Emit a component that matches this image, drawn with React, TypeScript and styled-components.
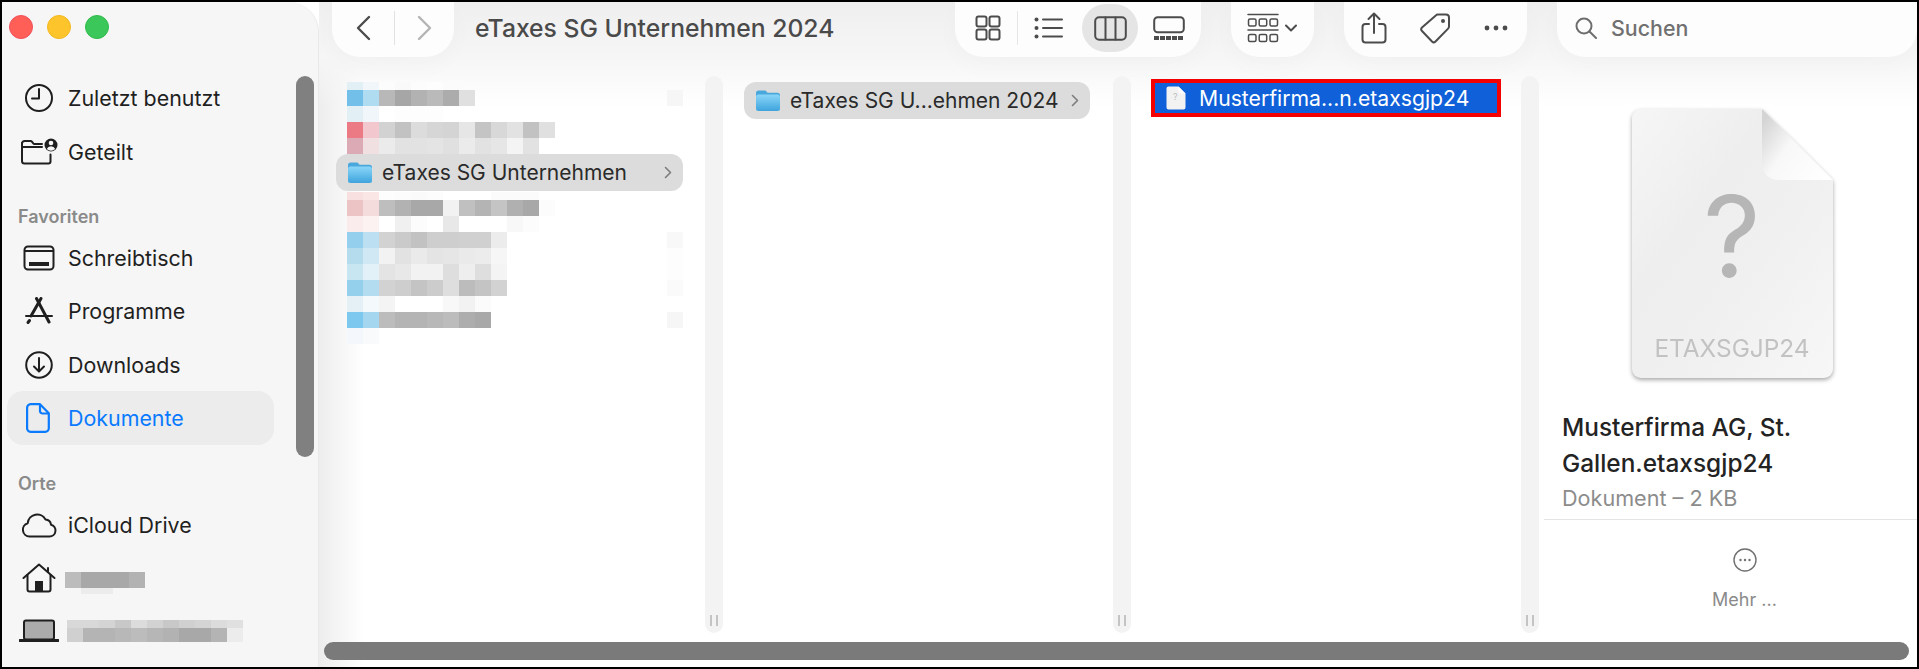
import React from "react";
import styled, { createGlobalStyle } from "styled-components";

const GlobalStyle = createGlobalStyle`
  html, body { margin: 0; padding: 0; background: #000; }
  body { font-family: Inter, "Noto Sans", sans-serif; }
`;

const Window = styled.div`
  box-sizing: border-box;
  width: 1919px;
  height: 669px;
  border: 2px solid #000;
  display: flex;
  overflow: hidden;
  background: #fff;
  color: #1f1f1f;
`;

// Sidebar
const Sidebar = styled.aside`
  position: relative;
  flex: none;
  box-sizing: border-box;
  width: 317px;
  height: 100%;
  background: #f6f6f6;
  border-top-right-radius: 30px;
  border-right: 1px solid #e9e9e9;
  overflow: hidden;
`;

const Lights = styled.div`
  display: flex;
  gap: 14px;
  padding: 13px 0 0 7px;
  height: 56px;
  box-sizing: border-box;
`;

const Light = styled.span<{ $color: string; $edge: string }>`
  width: 24px;
  height: 24px;
  border-radius: 50%;
  box-sizing: border-box;
  background: ${({ $color }) => $color};
  border: 1px solid ${({ $edge }) => $edge};
`;

const SidebarList = styled.div`
  padding-top: 13.5px;
`;

const SideRow = styled.div<{ $active?: boolean }>`
  display: flex;
  align-items: center;
  gap: 12px;
  box-sizing: border-box;
  width: 267px;
  height: 53.4px;
  margin-left: 5px;
  padding-left: 15px;
  border-radius: 16px;
  font-size: 21.4px;
  background: ${({ $active }) => ($active ? "#ececec" : "transparent")};
  color: ${({ $active }) => ($active ? "#0a7aff" : "#1f1f1f")};
`;

const SideIcon = styled.span`
  flex: none;
  display: flex;
  width: 34px;
  justify-content: center;
  align-items: center;

  svg {
    flex: none;
  }
`;

const MosaicSlot = styled.span<{ $ml: number }>`
  margin-left: ${({ $ml }) => $ml}px;
`;

const SideHeading = styled.div`
  box-sizing: border-box;
  height: 53px;
  padding: 28px 0 0 16px;
  font-size: 18px;
  line-height: 22px;
  font-weight: 600;
  color: #8a8a8a;
`;

const SideThumb = styled.div`
  position: absolute;
  left: 294px;
  top: 74px;
  width: 18px;
  height: 381px;
  border-radius: 9px;
  background: #808080;
`;

// Main area
const Main = styled.main`
  flex: 1;
  min-width: 0;
  display: flex;
  flex-direction: column;
  background: linear-gradient(to bottom, #efefef 0, #f6f6f6 55px, rgba(255, 255, 255, 0) 105px),
    linear-gradient(to right, #ededed 0, #ffffff 45px), #fff;
`;

const Toolbar = styled.header`
  flex: none;
  display: flex;
  align-items: flex-start;
  height: 58px;
  padding: 0 0 0 13px;
  gap: 30px;
`;

const Pill = styled.div<{ $w: number }>`
  flex: none;
  display: flex;
  align-items: center;
  box-sizing: border-box;
  width: ${({ $w }) => $w}px;
  height: 55px;
  padding-bottom: 3px;
  border-radius: 0 0 28px 28px;
  background: #fdfdfd;
  box-shadow: 0 8px 26px rgba(0, 0, 0, 0.025);
`;

const NavPill = styled(Pill)`
  margin-right: -9px;
`;

const Title = styled.h1`
  flex: 1;
  margin: 0;
  font-size: 24.7px;
  line-height: 53px;
  font-weight: 500;
  color: #4a4a4a;
  white-space: nowrap;
`;

const Slot = styled.span<{ $w?: number; $ml?: number; $active?: boolean }>`
  flex: none;
  display: flex;
  justify-content: center;
  align-items: center;
  width: ${({ $w }) => $w ?? 38}px;
  height: ${({ $active }) => ($active ? "48px" : "auto")};
  margin-left: ${({ $ml }) => $ml ?? 0}px;
  border-radius: 24px;
  background: ${({ $active }) => ($active ? "#e5e5e5" : "transparent")};
`;

const BarDivider = styled.span<{ $ml: number; $color?: string }>`
  flex: none;
  width: 1px;
  height: 34px;
  margin-left: ${({ $ml }) => $ml}px;
  background: ${({ $color }) => $color ?? "#e6e6e6"};
`;

const SearchText = styled.span`
  margin-left: 6px;
  font-size: 21.4px;
  font-weight: 500;
  color: #707070;
`;

const Panes = styled.div`
  flex: 1;
  min-height: 0;
  display: flex;
`;

const Column = styled.section<{ $w: number }>`
  flex: none;
  width: ${({ $w }) => $w}px;
  display: flex;
`;

const ColumnBody = styled.div<{ $pl: number }>`
  flex: 1;
  min-width: 0;
  padding: 22px 0 0 ${({ $pl }) => $pl}px;
`;

const Track = styled.div`
  flex: none;
  position: relative;
  width: 18px;
  margin: 16px 0 9px;
  border-radius: 9px;
  background: #f3f3f3;
`;

const Grip = styled.span`
  position: absolute;
  left: 5px;
  bottom: 7px;
  width: 8px;
  height: 11px;
  border: solid #c4c4c4;
  border-width: 0 2px;
  box-sizing: border-box;
`;

const FileRow = styled.div<{ $w: number; $ml?: number }>`
  display: flex;
  align-items: center;
  box-sizing: border-box;
  width: ${({ $w }) => $w}px;
  height: 37px;
  margin: 0 0 1px ${({ $ml }) => $ml ?? 0}px;
  padding-left: 11px;
  border-radius: 12px;
  background: #dcdcdc;
  font-size: 21px;
  color: #2a2a2a;
  white-space: nowrap;
`;

const RowLabel = styled.span`
  flex: 1;
  margin-left: 9px;
`;

const RowChevron = styled.span`
  flex: none;
  display: flex;
  width: 22px;
  margin-right: 4px;
  justify-content: center;
`;

const HighlightRow = styled.div`
  display: flex;
  align-items: center;
  box-sizing: border-box;
  width: 350px;
  height: 38px;
  margin: -3px 0 0 20px;
  padding-left: 11px;
  border: 4px solid #f40000;
  background: #1061d9;
  font-size: 21.2px;
  color: #fff;
  white-space: nowrap;
`;

const HighlightLabel = styled.span`
  margin-left: 13px;
`;

const Preview = styled.section`
  flex: 1;
  min-width: 0;
  display: flex;
  flex-direction: column;
`;

const PreviewIcon = styled.div`
  display: flex;
  justify-content: center;
  padding: 49px 0 0 8px;
  height: 349px;
  box-sizing: border-box;
`;

const PreviewName = styled.h2`
  margin: 0;
  padding-left: 23px;
  font-size: 24.4px;
  line-height: 36px;
  font-weight: 500;
  color: #232323;
`;

const PreviewMeta = styled.div`
  padding: 5px 0 8px 23px;
  font-size: 21.6px;
  line-height: 25px;
  color: #8c8c8c;
`;

const PreviewRule = styled.div`
  height: 1px;
  margin-left: 5px;
  background: #e4e4e4;
`;

const MoreBlock = styled.div`
  display: flex;
  flex-direction: column;
  align-items: center;
  padding: 28px 0 0 33px;
  gap: 17px;
  font-size: 18px;
  color: #8a8a8a;
`;

const HScroll = styled.div`
  flex: none;
  height: 18px;
  margin: 0 8px 7px 5px;
  border-radius: 9px;
  background: #7a7a7a;
`;

// Pixelated redactions from the original screenshot
type MosaicRow = { h: number; cells: string[]; right?: string };

const Mosaic = ({ rows, width = 340 }: { rows: MosaicRow[]; width?: number }) => {
  let y = 0;
  const total = rows.reduce((sum, r) => sum + r.h, 0);
  return (
    <svg width={width} height={total} shapeRendering="crispEdges" style={{ display: "block" }}>
      {rows.map((row, i) => {
        const top = y;
        y += row.h;
        return (
          <g key={i}>
            {row.cells.map((c, j) => (
              <rect key={j} x={j * 16} y={top} width={16} height={row.h} fill={c} />
            ))}
            {row.right && <rect x={320} y={top} width={16} height={row.h} fill={row.right} />}
          </g>
        );
      })}
    </svg>
  );
};

const topRows: MosaicRow[] = [
  { h: 8, cells: ["#e2eff5", "#f0f6fa", "#fcfcfc", "#f9f9f9", "#fcfcfc", "#fdfdfd", "#fbfbfb"] },
  { h: 16, cells: ["#72c0ea", "#b0dcf2", "#b8b8b8", "#a6a6a6", "#b2b2b2", "#bababa", "#acacac", "#e0e0e0"], right: "#f6f6f6" },
  { h: 16, cells: ["#e2eff5", "#f0f6fa", "#ffffff", "#fdfdfd", "#fdfdfd", "#fdfdfd"] },
  { h: 16, cells: ["#ec7a85", "#f2c8ce", "#d2d2d2", "#c2c2c2", "#dcdcdc", "#d6d6d6", "#d4d4d4", "#e6e6e6", "#c4c4c4", "#d8d8d8", "#e2e2e2", "#c2c2c2", "#e0e0e0"] },
  { h: 16, cells: ["#dcaab4", "#f0e0e2", "#ebebeb", "#e2e2e2", "#e2e2e2", "#e4e4e4", "#e0e0e0", "#ebebeb", "#e2e2e2", "#e6e6e6", "#f4f4f4", "#e2e2e2"] },
];

const bottomRows: MosaicRow[] = [
  { h: 8, cells: ["#f8dfe0", "#fbe6e6", "#fdfdfd", "#fcfcfc", "#fafafa", "#fcfcfc", "#ffffff", "#ffffff", "#ffffff", "#fbfbfb", "#fbfbfb", "#fbfbfb"] },
  { h: 16, cells: ["#ecc4c6", "#f4dcdc", "#bebebe", "#b2b2b2", "#a8a8a8", "#a8a8a8", "#f2f2f2", "#c0c0c0", "#b4b4b4", "#c4c4c4", "#b0b0b0", "#a8a8a8", "#fcfcfc"] },
  { h: 16, cells: ["#faecec", "#fdf2f2", "#ffffff", "#f0f0f0", "#fcfcfc", "#ffffff", "#e8e8e8", "#ffffff", "#ffffff", "#ffffff", "#f8f8f8", "#fcfcfc"] },
  { h: 16, cells: ["#94d0ee", "#bcdff2", "#d2d2d2", "#cacaca", "#c2c2c2", "#cecece", "#cecece", "#d0d0d0", "#d0d0d0", "#ececec"], right: "#f8f8f8" },
  { h: 16, cells: ["#b4dcec", "#d0e8f4", "#f2f2f2", "#e2e2e2", "#eaeaea", "#e4e4e4", "#e6e6e6", "#eaeaea", "#ececec", "#f6f6f6"], right: "#fdfdfd" },
  { h: 16, cells: ["#c8e6f2", "#e2f1f8", "#e4e4e4", "#e8e8e8", "#f2f2f2", "#f2f2f2", "#dedede", "#eeeeee", "#dedede", "#f4f4f4"], right: "#fdfdfd" },
  { h: 16, cells: ["#94d0ec", "#b4dcf0", "#d2d2d2", "#cecece", "#c4c4c4", "#cccccc", "#dedede", "#bcbcbc", "#c4c4c4", "#d2d2d2"], right: "#fafafa" },
  { h: 16, cells: ["#e4f0f6", "#f4f9fc", "#f4f4f4", "#ffffff", "#ffffff", "#ffffff", "#f8f8f8", "#f2f2f2", "#fbfbfb"] },
  { h: 16, cells: ["#7cc8ee", "#a4d6f0", "#bcbcbc", "#b4b4b4", "#b4b4b4", "#b8b8b8", "#bcbcbc", "#adadad", "#a8a8a8"], right: "#f6f6f6" },
  { h: 16, cells: ["#f4f7fb", "#f8fafc"] },
];

const homeRows: MosaicRow[] = [
  { h: 10, cells: [] },
  { h: 16, cells: ["#bcbcbc", "#a8a8a8", "#a8a8a8", "#a8a8a8", "#b2b2b2"] },
  { h: 6, cells: ["#f6f6f6", "#ececec", "#ececec"] },
];

const laptopRows: MosaicRow[] = [
  { h: 8, cells: ["#d8d8d8", "#d8d8d8", "#d4d4d4", "#c8c8c8", "#dcdcdc", "#d2d2d2", "#c8c8c8", "#d0d0d0", "#d4d4d4", "#dcdcdc", "#e0e0e0"] },
  { h: 14, cells: ["#d0d0d0", "#b4b4b4", "#b4b4b4", "#b8b8b8", "#bcbcbc", "#b6b6b6", "#b2b2b2", "#a8a8a8", "#a8a8a8", "#b4b4b4", "#ececec"] },
];

// Icons
const ink = { fill: "none", stroke: "#1f1f1f", strokeWidth: 2, strokeLinecap: "round", strokeLinejoin: "round" } as const;
const gray = { ...ink, stroke: "#4c4c4c" };

const ClockIcon = () => (
  <svg width="30" height="30" viewBox="0 0 30 30">
    <g {...ink}>
      <circle cx="15" cy="15" r="13" />
      <path d="M15 6v9.5H8" />
    </g>
  </svg>
);
const SharedIcon = () => (
  <svg width="38" height="28" viewBox="0 0 38 28">
    <g {...ink}>
      <path d="M2 5.5a2.5 2.5 0 0 1 2.5-2.5h6a2 2 0 0 1 1.6.8l1 1.4c.3.5.9.8 1.5.8H22" />
      <path d="M2 9h20M2 5v18a2.5 2.5 0 0 0 2.5 2.5h24a2 2 0 0 0 2-2v-7" />
    </g>
    <circle cx="31" cy="7" r="6.5" fill="#1f1f1f" />
    <circle cx="31" cy="5" r="2.3" fill="#f6f6f6" />
    <path d="M26.8 11a4.6 4.6 0 0 1 8.4 0a6 6 0 0 1-8.4 0z" fill="#f6f6f6" />
  </svg>
);
const DesktopIcon = () => (
  <svg width="32" height="26" viewBox="0 0 32 26">
    <g {...ink}>
      <rect x="1.5" y="1.5" width="29" height="23" rx="3.5" />
      <path d="M2 6h28" />
    </g>
    <rect x="6" y="17" width="20" height="4" fill="#1f1f1f" />
  </svg>
);
const AppsIcon = () => (
  <svg width="30" height="28" viewBox="0 0 30 28">
    <g {...ink} strokeWidth={3}>
      <path d="M12.500 1.500L25 25" />
      <path d="M17 1.500L7 19" />
      <path d="M2 19h26" strokeWidth={2} />
      <path d="M4 25.500l1.500-2" strokeWidth={3} />
    </g>
  </svg>
);
const DownloadIcon = () => (
  <svg width="28" height="28" viewBox="0 0 28 28">
    <g {...ink}>
      <circle cx="14" cy="14" r="12.8" />
      <path d="M14 7v13M9 15.5l5 5 5-5" />
    </g>
  </svg>
);
const DocumentIcon = () => (
  <svg width="24" height="30" viewBox="0 0 24 30" style={{ marginLeft: -3 }}>
    <g fill="none" stroke="#0a7aff" strokeWidth="2.2" strokeLinejoin="round">
      <path d="M4.500 1.200h9.500l8.800 9v15a3.500 3.500 0 0 1-3.500 3.600h-14.800a3.500 3.500 0 0 1-3.400-3.600v-20.500a3.500 3.500 0 0 1 3.400-3.500z" />
      <path d="M14 1.500v6.500a2.500 2.500 0 0 0 2.500 2.500h6" />
    </g>
  </svg>
);
const CloudIcon = () => (
  <svg width="36" height="26" viewBox="0 0 36 26">
    <path {...ink} d="M8.500 24.500a6.800 6.800 0 0 1-1.800-13.300 9.500 9.500 0 0 1 17.800-3.700 6 6 0 0 1 5.500 5.200 6 6 0 0 1-1.500 11.800z" />
  </svg>
);
const HomeIcon = () => (
  <svg width="34" height="30" viewBox="0 0 34 30">
    <g {...ink}>
      <path d="M1.500 15L17 1.500 32.500 15" />
      <path d="M5.500 12v14.500a2 2 0 0 0 2 2h19a2 2 0 0 0 2-2V12" />
      <path d="M26 5v4" />
    </g>
    <rect x="13" y="18" width="8" height="10" fill="#1f1f1f" />
  </svg>
);
const LaptopIcon = () => (
  <svg width="40" height="24" viewBox="0 0 40 24">
    <rect x="5" y="1.500" width="30" height="19" rx="2" fill="#ababab" stroke="#1f1f1f" strokeWidth="2" />
    <path d="M1 21.500h38" stroke="#1f1f1f" strokeWidth="3" strokeLinecap="round" />
  </svg>
);

const BackIcon = ({ color, flip }: { color: string; flip?: boolean }) => (
  <svg width="16" height="26" viewBox="0 0 16 26" style={flip ? { transform: "scaleX(-1)" } : undefined}>
    <path d="M14 2L3 13l11 11" fill="none" stroke={color} strokeWidth="2.400" strokeLinecap="round" strokeLinejoin="round" />
  </svg>
);
const GridIcon = () => (
  <svg width="26" height="26" viewBox="0 0 26 26">
    <g {...gray}>
      <rect x="1.500" y="1.500" width="10" height="10" rx="2" />
      <rect x="14.500" y="1.500" width="10" height="10" rx="2" />
      <rect x="1.500" y="14.500" width="10" height="10" rx="2" />
      <rect x="14.500" y="14.500" width="10" height="10" rx="2" />
    </g>
  </svg>
);
const ListIcon = () => (
  <svg width="29" height="22" viewBox="0 0 29 22">
    <g {...gray}>
      <path d="M9 2.500h19M9 11h19M9 19.500h19" />
    </g>
    <circle cx="2.500" cy="2.500" r="2" fill="#4c4c4c" />
    <circle cx="2.500" cy="11" r="2" fill="#4c4c4c" />
    <circle cx="2.500" cy="19.500" r="2" fill="#4c4c4c" />
  </svg>
);
const ColumnsIcon = () => (
  <svg width="33" height="25" viewBox="0 0 33 25">
    <g {...gray}>
      <rect x="1.200" y="1.200" width="30.600" height="22.600" rx="4" />
      <path d="M11.500 1.500v22M21.500 1.500v22" />
    </g>
  </svg>
);
const GalleryIcon = () => (
  <svg width="32" height="25" viewBox="0 0 32 25">
    <rect {...gray} x="1.200" y="1.200" width="29.600" height="15" rx="3.500" />
    {[1, 7, 13, 19, 25].map((x) => (
      <rect key={x} x={x} y="20" width="5" height="4" fill="#4c4c4c" />
    ))}
  </svg>
);
const GroupIcon = () => (
  <svg width="32" height="30" viewBox="0 0 32 30">
    <g {...gray} strokeWidth={1.500}>
      <path d="M1 1.500h30M1 17h30" />
      <rect x="1.500" y="6" width="7.500" height="7" rx="1.500" />
      <rect x="12.200" y="6" width="7.500" height="7" rx="1.500" />
      <rect x="23" y="6" width="7.500" height="7" rx="1.500" />
      <rect x="1.500" y="21.500" width="7.500" height="7" rx="1.500" />
      <rect x="12.200" y="21.500" width="7.500" height="7" rx="1.500" />
      <rect x="23" y="21.500" width="7.500" height="7" rx="1.500" />
    </g>
  </svg>
);
const SmallChevron = () => (
  <svg width="12" height="8" viewBox="0 0 12 8">
    <path d="M1 1.500l5 5 5-5" {...gray} />
  </svg>
);
const ShareIcon = () => (
  <svg width="26" height="32" viewBox="0 0 26 32">
    <g {...gray}>
      <path d="M8 12H4.500a3 3 0 0 0-3 3v12.500a3 3 0 0 0 3 3h17a3 3 0 0 0 3-3V15a3 3 0 0 0-3-3H18" />
      <path d="M13 21V2M7.500 7L13 1.500 18.500 7" />
    </g>
  </svg>
);
const TagIcon = () => (
  <svg width="31" height="32" viewBox="0 0 31 32">
    <path {...gray} d="M18 2.500h8a3 3 0 0 1 3 3v9a3 3 0 0 1-.9 2.100L15.500 29.500a2.500 2.500 0 0 1-3.500 0L2 19a2.500 2.500 0 0 1 0-3.500L15.800 3.400a3 3 0 0 1 2.200-.9z" />
    <circle cx="23" cy="9" r="2" fill="#4c4c4c" />
  </svg>
);
const DotsIcon = () => (
  <svg width="24" height="6" viewBox="0 0 24 6">
    <circle cx="3" cy="3" r="2.400" fill="#4c4c4c" />
    <circle cx="12" cy="3" r="2.400" fill="#4c4c4c" />
    <circle cx="21" cy="3" r="2.400" fill="#4c4c4c" />
  </svg>
);
const SearchIcon = () => (
  <svg width="22" height="22" viewBox="0 0 22 22">
    <circle cx="9" cy="9" r="7.500" fill="none" stroke="#6e6e6e" strokeWidth="2" />
    <path d="M14.500 14.500L21 21" stroke="#6e6e6e" strokeWidth="2" strokeLinecap="round" />
  </svg>
);
const FolderIcon = ({ id }: { id: string }) => (
  <svg width="26" height="23" viewBox="0 0 26 23">
    <defs>
      <linearGradient id={id} x1="0" y1="0" x2="0" y2="1">
        <stop offset="0" stopColor="#8ad6f8" />
        <stop offset="1" stopColor="#3ea4dd" />
      </linearGradient>
    </defs>
    <path d="M1 4a2.500 2.500 0 0 1 2.500-2.500h6c1 0 1.600.5 2.200 1.200l.8 1h10a2.500 2.500 0 0 1 2.500 2.500v2H1z" fill="#4aa8dc" />
    <rect x="1" y="5.500" width="24" height="16.500" rx="2.500" fill={`url(#${id})`} />
  </svg>
);
const TinyChevron = () => (
  <svg width="8" height="13" viewBox="0 0 8 13">
    <path d="M1.500 1.500l5 5-5 5" fill="none" stroke="#7d7d7d" strokeWidth="1.600" strokeLinecap="round" strokeLinejoin="round" />
  </svg>
);
const TinyFile = () => (
  <svg width="20" height="24" viewBox="0 0 20 24">
    <path d="M2.500 0.500h10l7 7v14a2 2 0 0 1-2 2h-15a2 2 0 0 1-2-2v-19a2 2 0 0 1 2-2z" fill="#f2f2f2" />
    <path d="M12.500 0.500v5a2 2 0 0 0 2 2h5z" fill="#ffffff" />
    <text x="7" y="14" fontSize="9" fill="#bdbdbd" fontFamily="Inter, sans-serif">?</text>
  </svg>
);
const MoreIcon = () => (
  <svg width="24" height="24" viewBox="0 0 24 24">
    <circle cx="12" cy="12" r="11" fill="none" stroke="#707070" strokeWidth="1.400" />
    <circle cx="7.500" cy="12" r="1.200" fill="#707070" />
    <circle cx="12" cy="12" r="1.200" fill="#707070" />
    <circle cx="16.500" cy="12" r="1.200" fill="#707070" />
  </svg>
);
const DocPreview = () => (
  <svg width="201" height="269" viewBox="0 0 201 269" style={{ overflow: "visible", filter: "drop-shadow(0 2px 2px rgba(0,0,0,.34))" }}>
    <defs>
      <linearGradient id="docBody" x1="0" y1="0" x2="1" y2="1">
        <stop offset="0" stopColor="#f6f6f6" />
        <stop offset="0.35" stopColor="#eeeeee" />
        <stop offset="0.6" stopColor="#f0f0f0" />
        <stop offset="1" stopColor="#f7f7f7" />
      </linearGradient>
      <linearGradient id="docFold" x1="0" y1="0.2" x2="1" y2="0.9">
        <stop offset="0" stopColor="#d4d4d4" />
        <stop offset="0.4" stopColor="#f8f8f8" />
        <stop offset="1" stopColor="#ffffff" />
      </linearGradient>
    </defs>
    <path d="M9 0H130L201 71V260a9 9 0 0 1-9 9H9a9 9 0 0 1-9-9V9a9 9 0 0 1 9-9z" fill="url(#docBody)" />
    <path d="M130 0V55a16 16 0 0 0 16 16H201z" fill="url(#docFold)" />
    <text x="100" y="168" textAnchor="middle" fontSize="112" fontWeight="400" fill="#b6b6b6" fontFamily="Inter, sans-serif">?</text>
    <text x="100" y="248" textAnchor="middle" fontSize="24.400" fill="#c2c2c2" fontFamily="Inter, sans-serif">ETAXSGJP24</text>
  </svg>
);

const App = () => (
  <>
    <GlobalStyle />
    <Window>
      <Sidebar>
        <Lights>
          <Light $color="#ff5f57" $edge="#f0505c" />
          <Light $color="#fdc42c" $edge="#f2b820" />
          <Light $color="#3cc75a" $edge="#30bb4c" />
        </Lights>
        <SidebarList>
          <SideRow><SideIcon><ClockIcon /></SideIcon>Zuletzt benutzt</SideRow>
          <SideRow><SideIcon><SharedIcon /></SideIcon>Geteilt</SideRow>
          <SideHeading>Favoriten</SideHeading>
          <SideRow><SideIcon><DesktopIcon /></SideIcon>Schreibtisch</SideRow>
          <SideRow><SideIcon><AppsIcon /></SideIcon>Programme</SideRow>
          <SideRow><SideIcon><DownloadIcon /></SideIcon>Downloads</SideRow>
          <SideRow $active><SideIcon><DocumentIcon /></SideIcon>Dokumente</SideRow>
          <SideHeading>Orte</SideHeading>
          <SideRow><SideIcon><CloudIcon /></SideIcon>iCloud Drive</SideRow>
          <SideRow><SideIcon><HomeIcon /></SideIcon><MosaicSlot $ml={-3}><Mosaic rows={homeRows} width={80} /></MosaicSlot></SideRow>
          <SideRow><SideIcon><LaptopIcon /></SideIcon><MosaicSlot $ml={-1}><Mosaic rows={laptopRows} width={176} /></MosaicSlot></SideRow>
        </SidebarList>
        <SideThumb />
      </Sidebar>
      <Main>
        <Toolbar>
          <NavPill $w={122}>
            <Slot $w={62}><BackIcon color="#4c4c4c" /></Slot>
            <BarDivider $ml={0} $color="#e2e2e2" />
            <Slot $w={59}><BackIcon color="#b4b4b4" flip /></Slot>
          </NavPill>
          <Title>eTaxes SG Unternehmen 2024</Title>
          <Pill $w={246}>
            <Slot $ml={14}><GridIcon /></Slot>
            <BarDivider $ml={10} />
            <Slot $ml={11}><ListIcon /></Slot>
            <Slot $w={56} $ml={15} $active><ColumnsIcon /></Slot>
            <Slot $ml={12}><GalleryIcon /></Slot>
          </Pill>
          <Pill $w={83}>
            <Slot $ml={13} $w={37}><GroupIcon /></Slot>
            <Slot $ml={3} $w={14}><SmallChevron /></Slot>
          </Pill>
          <Pill $w={183}>
            <Slot $ml={11}><ShareIcon /></Slot>
            <Slot $ml={23}><TagIcon /></Slot>
            <Slot $ml={23}><DotsIcon /></Slot>
          </Pill>
          <Pill $w={360}>
            <Slot $ml={10}><SearchIcon /></Slot>
            <SearchText>Suchen</SearchText>
          </Pill>
        </Toolbar>
        <Panes>
          <Column $w={404}>
            <ColumnBody $pl={28}>
              <Mosaic rows={topRows} />
              <FileRow $w={347} $ml={-11}>
                <FolderIcon id="folderA" />
                <RowLabel>eTaxes SG Unternehmen</RowLabel>
                <RowChevron><TinyChevron /></RowChevron>
              </FileRow>
              <Mosaic rows={bottomRows} />
            </ColumnBody>
            <Track><Grip /></Track>
          </Column>
          <Column $w={408}>
            <ColumnBody $pl={21}>
              <FileRow $w={346}>
                <FolderIcon id="folderB" />
                <RowLabel>eTaxes SG U...ehmen 2024</RowLabel>
                <RowChevron><TinyChevron /></RowChevron>
              </FileRow>
            </ColumnBody>
            <Track><Grip /></Track>
          </Column>
          <Column $w={408}>
            <ColumnBody $pl={0}>
              <HighlightRow>
                <TinyFile />
                <HighlightLabel>Musterfirma...n.etaxsgjp24</HighlightLabel>
              </HighlightRow>
            </ColumnBody>
            <Track><Grip /></Track>
          </Column>
          <Preview>
            <PreviewIcon><DocPreview /></PreviewIcon>
            <PreviewName>Musterfirma AG, St.<br />Gallen.etaxsgjp24</PreviewName>
            <PreviewMeta>Dokument – 2 KB</PreviewMeta>
            <PreviewRule />
            <MoreBlock>
              <MoreIcon />
              Mehr ...
            </MoreBlock>
          </Preview>
        </Panes>
        <HScroll />
      </Main>
    </Window>
  </>
);

export default App;
